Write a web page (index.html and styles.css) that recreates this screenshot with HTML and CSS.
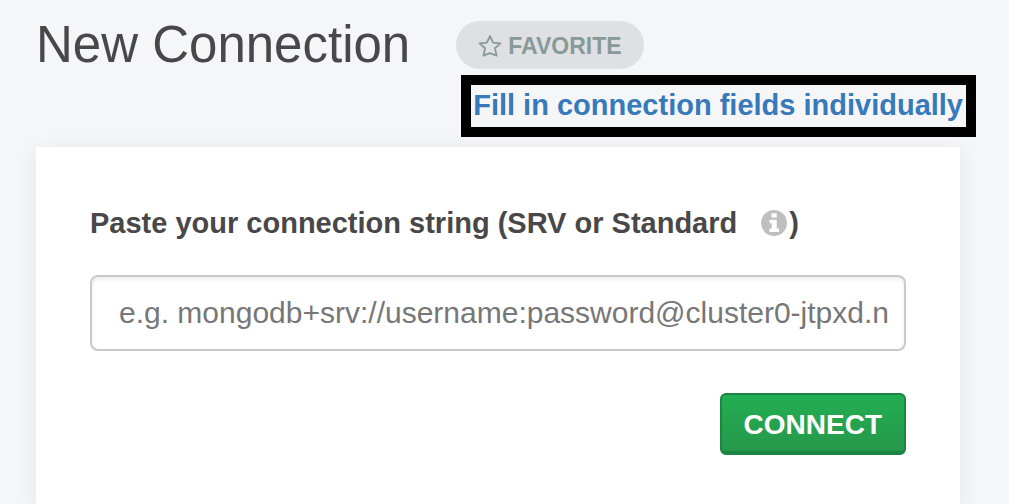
FILE: index.html
```html
<!DOCTYPE html>
<html lang="en">
<head>
<meta charset="utf-8">
<title>New Connection</title>
<link rel="stylesheet" href="styles.css">
</head>
<body>
<main class="page">
  <header class="header">
    <h1 class="title">New Connection</h1>
    <button class="favorite" type="button">
      <svg class="favorite-icon" viewBox="0 0 24 24" aria-hidden="true"><path d="M12 2l3.1 6.700 7.400.7-5.600 4.900 1.700 7.300L12 19.100l-6.600 2.500 1.700-7.300L1.500 9.400l7.400-.7z" fill="none" stroke="currentColor" stroke-width="1.8" stroke-linejoin="round"/></svg>
      FAVORITE
    </button>
  </header>
  <div class="switch">
    <a class="switch-link" href="#fields">Fill in connection fields individually</a>
  </div>
  <form class="card">
    <div class="label-row">
      <label for="connection-string">Paste your connection string (SRV or Standard</label>
      <svg class="info-icon" viewBox="0 0 26 26" role="img" aria-label="Info"><circle cx="13" cy="13" r="13" fill="#bfbfbf"/><path d="M10.500 3.200h5.200v4.300h-5.200zM8.500 9.700h7.200v8.800h2.300v3.600H8.500v-3.600h2.200v-5.200H8.500z" fill="#fff"/></svg>
      <span>)</span>
    </div>
    <input class="field" id="connection-string" type="text" placeholder="e.g. mongodb+srv://username:password@cluster0-jtpxd.n">
    <button class="connect" type="button">CONNECT</button>
  </form>
</main>
</body>
</html>
```
FILE: styles.css
```css
* {
  box-sizing: border-box;
}

body {
  margin: 0;
  background: #f5f6f8;
  color: #494747;
  font-family: "Liberation Sans", Arial, sans-serif;
}

.page {
  display: flex;
  flex-direction: column;
  min-height: 100vh;
  padding: 15px 33px 0 36px;
}

.header {
  display: flex;
  align-items: center;
  gap: 46px;
  height: 60px;
}

.title {
  margin: 0;
  font-size: 51px;
  font-weight: 400;
  line-height: 60px;
}

.favorite {
  display: flex;
  align-items: center;
  gap: 6px;
  height: 48px;
  padding: 2px 22px 0;
  border: 0;
  border-radius: 24px;
  background: #dfe0e4;
  color: #889a98;
  font: bold 23px "Liberation Sans", Arial, sans-serif;
}

.favorite-icon {
  width: 24px;
  height: 24px;
}

.switch {
  position: relative;
  align-self: flex-end;
  border: 10px solid #000;
  background: #f5f6f8;
}

.switch-link {
  display: block;
  padding: 0 3px 2px 2px;
  color: #3879ba;
  font-size: 29px;
  font-weight: bold;
  line-height: 40px;
  text-decoration: none;
}

.card {
  display: flex;
  flex: 1;
  flex-direction: column;
  margin: 10px 16px 0 0;
  padding: 56px 54px 48px;
  background: #fff;
  box-shadow: 0 4px 20px rgba(0, 0, 0, 0.08);
}

.label-row {
  display: flex;
  align-items: center;
  margin-bottom: 32px;
  font-size: 29px;
  font-weight: bold;
  line-height: 40px;
}

.info-icon {
  width: 26px;
  height: 26px;
  margin: 0 2px 0 24px;
}

.field {
  width: 100%;
  height: 76px;
  padding: 0 12px 0 27px;
  border: 2px solid #c9c9c9;
  border-radius: 8px;
  background: #fff;
  box-shadow: inset 0 2px 4px rgba(0, 0, 0, 0.08);
  color: #494747;
  font: 30px "Liberation Sans", Arial, sans-serif;
}

.field::placeholder {
  color: #777;
  opacity: 1;
}

.connect {
  align-self: flex-end;
  height: 62px;
  margin-top: 42px;
  padding: 4px 22px 0;
  border: 2px solid #1d8542;
  border-bottom-width: 4px;
  border-radius: 6px;
  background: linear-gradient(#23ae53, #26984b);
  color: #fff;
  font: bold 28px "Liberation Sans", Arial, sans-serif;
}
```
